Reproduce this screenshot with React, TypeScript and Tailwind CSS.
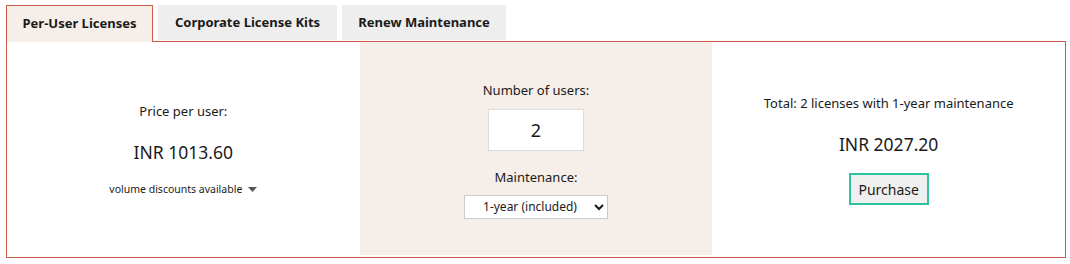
import { useState } from "react";

const tabs = [
  { label: "Per-User Licenses", w: "w-[147px]" },
  { label: "Corporate License Kits", w: "w-[179px]" },
  { label: "Renew Maintenance", w: "w-[164px]" },
];

export default function App() {
  const [active, setActive] = useState(0);
  const [users, setUsers] = useState("2");

  return (
    <div
      className="w-[1070px] h-[264px] bg-white text-[#1a1a1a] px-[6px] pt-[4px]"
      style={{ fontFamily: '"Noto Sans", "Open Sans", sans-serif' }}
    >
      {/* tabs */}
      <div className="flex items-end gap-[5px] h-[37px]">
        {tabs.map((t, i) =>
          i === active ? (
            <button
              key={t.label}
              onClick={() => setActive(i)}
              className={`relative h-[37px] ${t.w} border border-b-0 border-[#cc5b4b] bg-[#f6eee9] text-[13px] font-bold -mb-px z-10`}
            >
              {t.label}
            </button>
          ) : (
            <button
              key={t.label}
              onClick={() => setActive(i)}
              className={`h-[35px] ${t.w} bg-[#eeeeee] text-[13px] font-bold mb-px`}
            >
              {t.label}
            </button>
          )
        )}
      </div>

      {/* panel */}
      <div className="w-[1060px] h-[217px] border border-[#cc5b4b] grid grid-cols-3">
        <div className="flex flex-col items-center justify-center">
          <div className="text-[13px]">Price per user:</div>
          <div className="text-[17.5px] mt-[18px]">INR 1013.60</div>
          <button className="mt-[16px] text-[10.5px] flex items-center gap-[6px]">
            volume discounts available
            <svg width="9" height="5" viewBox="0 0 9 5">
              <path d="M0 0h9L4.5 5z" fill="#555" />
            </svg>
          </button>
        </div>

        <div className="flex flex-col items-center justify-center bg-[#f6eee9] mb-[2px] pt-[2px]">
          <div className="text-[13px]">Number of users:</div>
          <input
            value={users}
            onChange={(e) => setUsers(e.target.value)}
            className="mt-[9px] w-[96px] h-[42px] bg-white border border-[#dddddd] text-center text-[18px] outline-none"
          />
          <div className="text-[13px] mt-[17px]">Maintenance:</div>
          <select className="mt-[7px] w-[144px] h-[24px] bg-white border border-[#cccccc] text-[12px] text-center">
            <option>1-year (included)</option>
            <option>2-year</option>
            <option>3-year</option>
          </select>
        </div>

        <div className="flex flex-col items-center justify-center">
          <div className="text-[13px]">Total: 2 licenses with 1-year maintenance</div>
          <div className="text-[17.5px] mt-[18px]">INR 2027.20</div>
          <button className="mt-[16px] w-[80px] h-[32px] bg-[#efefef] border-2 border-[#2ec4a0] text-[14px]">
            Purchase
          </button>
        </div>
      </div>
    </div>
  );
}
